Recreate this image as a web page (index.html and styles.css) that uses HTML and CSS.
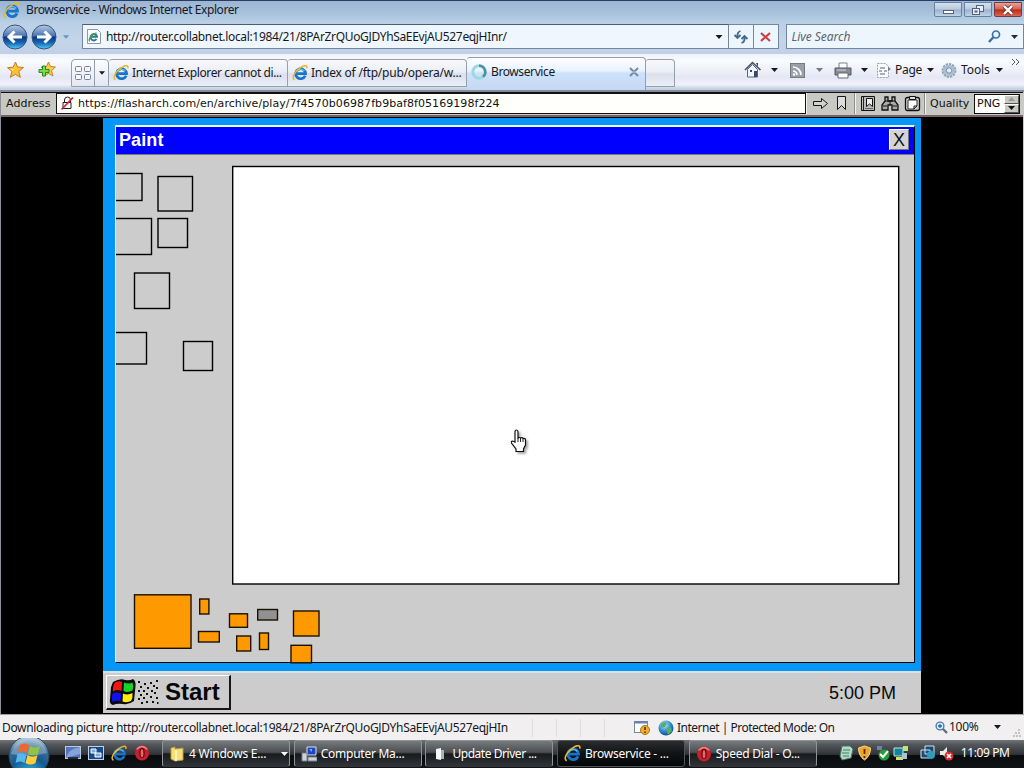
FILE: index.html
```html
<!DOCTYPE html>
<html lang="en">
<head>
<meta charset="utf-8">
<title>Browservice - Windows Internet Explorer</title>
<link rel="stylesheet" href="styles.css">
</head>
<body>
<svg class="defs" width="0" height="0" aria-hidden="true">
  <defs>
    <linearGradient id="orb" x1="0" y1="0" x2="0" y2="1"><stop offset="0" stop-color="#b9cbe5"/><stop offset=".45" stop-color="#4775b2"/><stop offset=".5" stop-color="#0d3580"/><stop offset=".75" stop-color="#1768b8"/><stop offset="1" stop-color="#53d0f5"/></linearGradient>
    <radialGradient id="globe" cx=".4" cy=".3" r=".7"><stop offset="0" stop-color="#bfe9ff"/><stop offset=".6" stop-color="#2b8acb"/><stop offset="1" stop-color="#12508e"/></radialGradient>
    <radialGradient id="startorb" cx=".5" cy="1" r=".95"><stop offset="0" stop-color="#34c4ed"/><stop offset=".5" stop-color="#15588f"/><stop offset=".8" stop-color="#3f6f98"/><stop offset="1" stop-color="#a9c5d8"/></radialGradient>
    <symbol id="ie" viewBox="0 0 16 16">
      <path d="M13.2 10.7A5 5 0 1 1 13.6 8.6H5.2" fill="none" stroke="#1675c9" stroke-width="2.7"/>
      <path d="M4.6 7.2A4.6 4.6 0 0 1 12.5 6" fill="none" stroke="#62c2f2" stroke-width="1.1"/>
      <path d="M2.6 14.8C-1 13.5 2.5 6.5 8 3 12-.2 15.8-.2 14.8 3.4" fill="none" stroke="#e9b92c" stroke-width="1.5"/>
    </symbol>
    <symbol id="caret" viewBox="0 0 7 4"><path d="M0 0h7L3.5 4z" fill="currentColor"/></symbol>
    <symbol id="opera" viewBox="0 0 16 16"><ellipse cx="8" cy="8" rx="7" ry="7.4" fill="#c7202b"/><path d="M2.6 4.4Q8-1.5 13.4 4.4" stroke="#f58a8a" stroke-width="1.4" fill="none"/><ellipse cx="8" cy="8" rx="2.7" ry="5" fill="#5e0b12"/><ellipse cx="8" cy="8.3" rx="1.4" ry="4" fill="#e9676b"/></symbol>
  </defs>
</svg>

<header class="titlebar">
  <svg class="title-icon" width="17" height="17"><use href="#ie"/></svg>
  <span class="title-text">Browservice - Windows Internet Explorer</span>
  <div class="winbtns">
    <span class="winbtn"><svg width="26" height="14"><rect x="8.500" y="7.500" width="10" height="3" fill="#fff" stroke="#53627b"/></svg></span>
    <span class="winbtn"><svg width="26" height="14" fill="#e8eef6" stroke="#53627b"><rect x="11.500" y="2.500" width="7" height="6"/><rect x="7.500" y="5.500" width="7" height="6"/><rect x="10" y="8" width="2" height="1"/></svg></span>
    <span class="winbtn close"><svg width="26" height="14"><path d="M9 3l8 8M17 3l-8 8" stroke="#713b3b" stroke-width="4"/><path d="M9 3l8 8M17 3l-8 8" stroke="#fff" stroke-width="2.400"/></svg></span>
  </div>
</header>

<nav class="navbar">
  <svg class="orb" width="26" height="26" viewBox="0 0 26 26"><circle cx="13" cy="13" r="12" fill="url(#orb)" stroke="#3b5275"/><path d="M20 13H8M12.500 7.500L7 13l5.500 5.500" stroke="#fff" stroke-width="3" fill="none"/></svg>
  <svg class="orb fwd" width="26" height="26" viewBox="0 0 26 26"><circle cx="13" cy="13" r="12" fill="url(#orb)" stroke="#3b5275"/><path d="M6 13h12M13.500 7.500L19 13l-5.500 5.500" stroke="#fff" stroke-width="3" fill="none"/></svg>
  <svg class="history" width="6" height="4"><use href="#caret"/></svg>
  <div class="url">
    <svg width="16" height="17" viewBox="0 0 16 17"><path d="M1.500 1.500h10l3 3v11h-13z" fill="#fcfdff" stroke="#8b98a5"/><path d="M10.500 11a3.200 3.200 0 1 1 .5-2.200H5" stroke="#287a9a" stroke-width="1.900" fill="none"/><path d="M3.500 13.500C2 11 6 6 10.500 4.800" stroke="#5b9d3b" fill="none" stroke-width="1.200"/></svg>
    <span class="url-text">http://router.collabnet.local:1984/21/8PArZrQUoGJDYhSaEEvjAU527eqjHInr/</span>
    <svg class="end" width="8" height="4"><use href="#caret"/></svg>
  </div>
  <div class="navbtn"><svg width="16" height="16" fill="none" stroke="#456a8c" stroke-width="1.800"><path d="M7.500 2Q4 3 4.500 8M1.500 6l3 3 3-3M8.500 14Q12 13 11.500 8M8.500 10l3-3 3 3"/></svg></div>
  <div class="navbtn stop"><svg width="14" height="14"><path d="M2 3l9 8M11 3l-9 8" stroke="#c94047" stroke-width="2.200"/></svg></div>
  <div class="search"><span>Live Search</span><svg class="lens" width="15" height="15" fill="none" stroke="#3e70a8"><circle cx="9" cy="5.500" r="3.500" fill="#eaf6ff" stroke-width="1.700"/><path d="M6.500 8L2 13" stroke-width="2.500"/></svg><svg width="7" height="4"><use href="#caret"/></svg></div>
</nav>

<div class="tabbar">
  <svg class="star" width="18" height="18" viewBox="0 0 18 18"><path d="M8.500 1l2 5 6 .5-4.700 4 1.500 5.800-5-3-5 3L5 10.500.500 6.700l5.700-.5z" fill="#fbc234" stroke="#c37c24"/><path d="M8.500 3L7 8 3 8l3 2" fill="#ffe893"/></svg>
  <svg class="star add" width="18" height="18" viewBox="0 0 18 18"><path d="M10.500 1l2 4.500 5 .5-4 3.500 1.500 5.500-4.500-2.500-5 2.500 1.500-5L3 6l5.500-.500z" fill="#fbc943" stroke="#bd8933"/><path d="M4.500 5h3v3.500H11v3H7.500V15h-3v-3.500H1v-3h3.500z" fill="#74df44" stroke="#2d852a"/></svg>
  <div class="quick"><svg width="22" height="24" fill="#f5f7fb" stroke="#75809a"><rect x="3.500" y="6.500" width="6" height="5" rx="1"/><rect x="12.500" y="6.500" width="6" height="5" rx="1"/><rect x="3.500" y="14.500" width="6" height="5" rx="1"/><rect x="12.500" y="14.500" width="6" height="5" rx="1"/></svg><span class="quick-drop"><svg width="6" height="4"><use href="#caret"/></svg></span></div>
  <div class="tab"><svg width="16" height="16"><use href="#ie"/></svg><span>Internet Explorer cannot di...</span></div>
  <div class="tab"><svg width="16" height="16"><use href="#ie"/></svg><span class="ftp">Index of /ftp/pub/opera/w...</span></div>
  <div class="tab active"><svg width="18" height="18" fill="none"><circle cx="9" cy="9" r="6.200" stroke="#9fd8df" stroke-width="3"/><path d="M9 2.800a6.200 6.200 0 0 1 4 11" stroke="#4d919f" stroke-width="2.500"/></svg><span>Browservice</span><svg class="tab-x" width="10" height="10"><path d="M1 1l8 8M9 1L1 9" stroke="#728b9d" stroke-width="2"/><path d="M3 5h4" stroke="#c5d6e3"/></svg></div>
  <div class="tab new"></div>
  <div class="cmds">
    <svg width="18" height="18" viewBox="0 0 18 18"><path d="M1 9l7.500-7.500L16.500 9" stroke="#42506c" stroke-width="1.600" fill="none"/><path d="M3.500 8.500l5-5 5 5v7.500h-10z" fill="#f2f5f9" stroke="#576783"/><path d="M12 2h2v4M10 10h3v6h-3zM6 9h2v2H6z" fill="#394866"/></svg>
    <svg class="c1" width="7" height="4"><use href="#caret"/></svg>
    <svg class="rss" width="15" height="15"><rect x=".5" y=".5" width="14" height="14" fill="#9aa0a8" stroke="#747b84"/><path d="M3 4a8 8 0 0 1 8 8M3 8a4 4 0 0 1 4 4" stroke="#fff" stroke-width="1.700" fill="none"/><circle cx="4" cy="11.500" r="1.200" fill="#fff"/></svg>
    <svg class="c2" width="7" height="4"><use href="#caret"/></svg>
    <svg class="printer" width="18" height="17"><path d="M5 1h8v6H5z" fill="#fff" stroke="#798290"/><path d="M1 6h16v7H1z" fill="#868e98" stroke="#50565e"/><path d="M3 8h9" stroke="#d0d5db"/><path d="M4 11h10v5H4z" fill="#fff" stroke="#626a73"/></svg>
    <svg class="c3" width="7" height="4"><use href="#caret"/></svg>
    <svg class="page" width="16" height="17"><path d="M1.500 1.500h8l3 3v11h-11z" fill="#f9fafc" stroke="#9b9fae" stroke-dasharray="2 1"/><path d="M4 6h5M3 9h3m2 0h3M4 12h5" stroke="#5a6274"/><path d="M12 5l3 2-3 2" fill="#727b92"/></svg>
    <span class="page-text">Page</span><svg width="7" height="4"><use href="#caret"/></svg>
    <svg class="gear" width="16" height="17" fill="none"><circle cx="8" cy="8.500" r="5.900" stroke="#8ea0b3" stroke-width="3" stroke-dasharray="2.200 .8"/><circle cx="8" cy="8.500" r="4.300" stroke="#a9bfd2" stroke-width="3"/><circle cx="8" cy="8.500" r="2.700" stroke="#7790a8"/></svg>
    <span class="tools-text">Tools</span><svg width="7" height="4"><use href="#caret"/></svg>
    <svg class="more" width="9" height="8"><path d="M1 1l3 3-3 3M5 1l3 3-3 3" fill="none" stroke="#535766"/></svg>
  </div>
</div>

<main class="page-area">
  <div class="remote-bar">
    <span class="address-label">Address</span>
    <div class="remote-url"><svg width="15" height="15"><path d="M4.500 6V4a3 3 0 0 1 6 0v2M3 6.500h8v6H3z" fill="none" stroke="#222"/><path d="M1.500 13.500L13 1.500" stroke="#dc1d3e" stroke-width="1.800"/></svg><span>https://flasharch.com/en/archive/play/7f4570b06987fb9baf8f05169198f224</span></div>
    <div class="rgroup go"><svg width="17" height="17" fill="#d2d2ce" stroke="#171717"><path d="M1.500 6.500h8v-3l6 5-6 5v-3h-8z"/></svg><svg class="bookmark" width="12" height="17"><path d="M1.500 1.500h8v13l-4-4-4 4z" fill="#ddd" stroke="#171717"/></svg></div>
    <div class="rgroup tools"><svg width="16" height="17"><path d="M1.500 1.500h13v14h-13z" fill="#bbb" stroke="#111"/><path d="M3.500 2v13" stroke="#222"/><path d="M6.500 3.500h6v8l-3-2.500-3 2.500z" fill="#eee" stroke="#111"/><path d="M5 13.500h8" stroke="#666"/></svg><svg width="18" height="17"><path d="M4 2h3v4h4V2h3v4l3 4v5h-6v-5H7v5H1v-5l3-4z" fill="#aaa" stroke="#111" stroke-width="1.300"/><path d="M4 6h10M2 11h4m6 0h4M9 6v4" stroke="#111"/></svg><svg width="17" height="17"><path d="M3.500 2.500h10q2 0 2 2v9q0 2-2 2h-10q-2 0-2-2v-9q0-2 2-2z" fill="#ccc" stroke="#111" stroke-width="1.300"/><path d="M4 5h9v6l-3 3H4z" fill="#fff" stroke="#333"/><path d="M5.500 1.500h6v3h-6z" fill="#ddd" stroke="#111"/><path d="M10 14v-3h3" stroke="#111" fill="none"/></svg></div>
    <div class="rgroup quality"><span>Quality</span><div class="select"><span>PNG</span><div class="spin"><i><svg width="7" height="4"><path d="M0 4h7L3.500 0z" fill="#999"/></svg></i><i><svg width="7" height="4"><use href="#caret"/></svg></i></div></div></div>
  </div>
  <div class="stage">
    <div class="desktop">
      <section class="paint">
        <div class="paint-title"><span>Paint</span><b class="paint-close">X</b></div>
        <svg class="paint-body" width="798" height="508" viewBox="116 154 798 508">
          <path d="M116 154H914" stroke="#222"/>
          <rect x="232.700" y="166.500" width="666" height="417.500" fill="#fff" stroke="#000" stroke-width="1.400"/>
          <g fill="none" stroke="#000" stroke-width="1.400">
            <rect x="110" y="173.500" width="32" height="27"/><rect x="158" y="176.500" width="34.500" height="34.500"/>
            <rect x="110" y="218.500" width="41.500" height="36"/><rect x="158" y="218.500" width="29.500" height="29"/>
            <rect x="134.500" y="273" width="35" height="35.500"/><rect x="110" y="332.500" width="36.500" height="31.500"/>
            <rect x="183.500" y="341.500" width="29" height="29"/>
          </g>
          <g fill="#f90" stroke="#1a1100" stroke-width="1.400">
            <rect x="134.500" y="594.800" width="56.500" height="53.500"/><rect x="199.700" y="599" width="9.200" height="15"/>
            <rect x="198.500" y="631.500" width="20.800" height="10.500"/><rect x="229.500" y="613.800" width="18" height="13.500"/>
            <rect x="257.700" y="609.500" width="19.800" height="10.500" fill="#919191"/><rect x="236.700" y="636" width="14" height="15"/>
            <rect x="259.500" y="633" width="9" height="16.500"/><rect x="293.500" y="611" width="25.500" height="25"/>
            <rect x="291" y="645.300" width="20.500" height="17.500"/>
          </g>
        </svg>
      </section>
      <div class="retro-bar">
        <div class="retro-start">
          <svg width="54" height="28" viewBox="0 0 54 28"><path d="M5 4Q12 0 17 2q5 1 8-1 3 2 2.500 7L26 23q-5 4-11 3-6-1-10 1-4-1-3-6L3 9z" fill="#0a0a0a"/><path d="M7 4.500q4-2 7-.5l-.5 9Q9 11 5 13.500q-.5-6 2-9z" fill="#f31713"/><path d="M16 4.500q5 2 8.500 0 1.500 4 0 8-5 2.500-9 .5z" fill="#17d527"/><path d="M4.500 15.500q4-2 8.500 0l-.5 8q-4-1.500-8 .5-1.500-4 0-8.500z" fill="#1012ed"/><path d="M15 15.500q5 2 9.500-.5.500 5-1.500 8-4 2-8.500.5z" fill="#ffec12"/><path fill="#111" d="M30 3h2v2h-2zM36 5h2v2h-2zM42 4h2v2h-2zM48 2h2v2h-2zM32 8h2v2h-2zM39 9h2v2h-2zM45 7h2v2h-2zM48 9h2v2h-2zM30 12h2v2h-2zM35 12h2v2h-2zM43 12h2v2h-2zM32 16h2v2h-2zM38 15h2v2h-2zM46 14h2v2h-2zM30 20h2v2h-2zM35 19h2v2h-2zM42 18h2v2h-2zM48 19h2v2h-2zM33 24h2v2h-2zM38 23h2v2h-2zM44 23h2v2h-2zM49 24h1.500v2H49z"/></svg>
          <b>Start</b>
        </div>
        <span class="retro-clock">5:00 PM</span>
      </div>
    </div>
    <svg class="cursor" width="18" height="24" viewBox="0 0 18 24"><path d="M5 13V3q0-2 1.500-2T8 3v6q2-1 2.500 0 2-1 2.500.500 2.500-.500 2.500 1.500v5l-2 4v2.500H6V20l-4.500-6q-.500-2 1-2z" fill="#fff" stroke="#111" stroke-width="1.200"/><path d="M8 9v4m2.500-4v4M13 10v3" stroke="#222"/></svg>
  </div>
</main>

<footer class="statusbar">
  <span class="download">Downloading picture http://router.collabnet.local:1984/21/8PArZrQUoGJDYhSaEEvjAU527eqjHIn</span>
  <i class="pane"></i><i class="pane"></i><i class="pane"></i><i class="pane"></i>
  <svg class="warn" width="18" height="16"><rect x="1.500" y="1.500" width="13" height="11" fill="#fff" stroke="#7b8694"/><path d="M2 2.500h12" stroke="#5f83bd" stroke-width="2"/><circle cx="12" cy="10" r="4.500" fill="#efad2b" stroke="#b27219"/><path d="M12 7v3m0 1.500v1.500" stroke="#463008" stroke-width="1.500"/></svg>
  <svg class="net" width="16" height="16"><circle cx="8" cy="8" r="7.500" fill="url(#globe)"/><path d="M3 4q3-3 6-1L7 7 3 8zM8 9l5-2 1 4-4 4z" fill="#55ad68"/></svg>
  <span class="zone">Internet | Protected Mode: On</span>
  <div class="zoom"><svg width="13" height="13" fill="none"><circle cx="5" cy="5" r="3.900" fill="#d9efff" stroke="#527ba5" stroke-width="1.400"/><path d="M8 8l4 4" stroke="#596a7b" stroke-width="2.300"/><path d="M3 5h4M5 3v4" stroke="#1569b7" stroke-width="1.300"/></svg><span>100%</span><svg class="zoom-caret" width="7" height="4"><use href="#caret"/></svg></div>
  <svg class="grip" width="8" height="9" fill="#c5c3c0"><path d="M5 1h2v2H5zM2 4h2v2H2zM5 4h2v2H5zM0 7h2v2H0zM3 7h2v2H3zM6 7h2v2H6z"/></svg>
</footer>

<div class="taskbar">
  <svg class="vista" width="44" height="32" viewBox="0 0 44 32"><circle cx="21" cy="18" r="20" fill="url(#startorb)" stroke="#2b4554"/><path d="M3 16Q7 1 21 0q14 1 18 15-18 5-36 1" fill="#d8e6ef" opacity=".35"/><path d="M12 7q5-3 9 0l-2 8q-4-3-9-1z" fill="#ef672b"/><path d="M22 8q5 3 10 0l-2 8q-5 3-10 0z" fill="#8fc448"/><path d="M9.500 16q5-2 9 1l-2 8q-4-3-9 0z" fill="#55b8ec"/><path d="M19.500 17q5 3 10 0l-2 8q-5 3-10 0z" fill="#ffce38"/></svg>
  <div class="launch">
    <svg width="16" height="14"><rect x=".5" y=".5" width="15" height="12" fill="#5475bb" stroke="#b8c9df"/><path d="M1 12Q3 3 15 1V8z" fill="#85a2da"/><path d="M3 12h10" stroke="#242c38" stroke-width="2"/></svg>
    <svg width="16" height="14"><rect x=".5" y=".5" width="15" height="13" fill="#174887" stroke="#bfd2e5"/><path d="M3 3h5v4H3zM7 7h6v4H7z" fill="#78aada" stroke="#fff"/></svg>
    <svg width="16" height="17"><use href="#ie"/></svg>
    <svg width="16" height="16"><use href="#opera"/></svg>
  </div>
  <div class="tasks">
    <div class="task"><svg width="16" height="16"><path d="M2 2l4-1v2l8-1v12l-8 1-4-2z" fill="#f3df7b" stroke="#b99b40"/><path d="M7 4v11" stroke="#fff4b4" stroke-width="2"/></svg><span>4 Windows E...</span><svg class="task-caret" width="7" height="4"><use href="#caret"/></svg></div>
    <div class="task"><svg width="16" height="16"><path d="M6 1h9v8H6z" fill="#1e46c1" stroke="#d8e2f4"/><path d="M1 7h5v8H1zM7 11h9v4H7z" fill="#cbd3db" stroke="#79818b"/><path d="M8 3h3v3" fill="#85aaf0"/></svg><span>Computer Ma...</span></div>
    <div class="task"><svg width="16" height="16"><path d="M4 3l5-1v12l-5-1z" fill="#f7f7f7"/><path d="M9 4h3v9H9z" fill="#adb1b4"/></svg><span class="driver">Update Driver ...</span></div>
    <div class="task pressed"><svg width="17" height="17"><use href="#ie"/></svg><span>Browservice - ...</span></div>
    <div class="task"><svg width="16" height="16"><use href="#opera"/></svg><span>Speed Dial - O...</span></div>
  </div>
  <div class="tray">
    <svg width="15" height="16"><path d="M3 1h8l3 3-2 9-9 2-2-4z" fill="#b5d9c5" stroke="#477567"/><path d="M4 5h7M3 8h7M4 11h6" stroke="#3e806d"/></svg>
    <svg width="15" height="16"><path d="M7.500 1l6 2q0 8-6 12-6-4-6-12z" fill="#eca62d" stroke="#f9d98c"/><path d="M7.500 4v5m0 2v2" stroke="#51300a" stroke-width="1.800"/></svg>
    <svg width="15" height="16"><path d="M2 1h5v4H2z" fill="#737fac"/><circle cx="9" cy="10" r="5.500" fill="#279d37"/><path d="M5 9l3 3 5-6" stroke="#fff" stroke-width="2" fill="none"/></svg>
    <svg width="16" height="16"><path d="M1 3h9v8H1z" fill="#138492" stroke="#bfe5ea"/><path d="M10 1h5v5h-5zM3 12h7v3H3z" fill="#c8e56b"/><path d="M9 8h5v6H9z" fill="#a9c5d1"/></svg>
    <svg class="network" width="16" height="16"><path d="M5 1h9v8H5zM1 5h9v8H1z" fill="#164d77" stroke="#d5e6ef"/><circle cx="11" cy="10" r="4" fill="#349bba"/></svg>
    <svg width="16" height="16"><path d="M1 6h3l4-4v12l-4-4H1z" fill="#e9e9e9"/><circle cx="10" cy="11" r="4.500" fill="#d52b2d"/><path d="M8 9l4 4m0-4l-4 4" stroke="#fff" stroke-width="1.600"/></svg>
    <span class="clock">11:09 PM</span>
  </div>
</div>
</body>
</html>
```
FILE: styles.css
```css
* { box-sizing: border-box; }
body { margin: 0; width: 1024px; height: 768px; overflow: hidden; display: flex; flex-direction: column; font: 12px/16px "Noto Sans", "Open Sans", sans-serif; color: #151922; background: #d4dfed; }
svg { display: block; flex: none; }
span { white-space: nowrap; }
.defs { position: absolute; }

.titlebar { height: 21px; flex: none; display: flex; align-items: flex-start; padding: 1px 2px 0 3px; border-top: 1px solid #243e68; background: linear-gradient(#9db5d1, #a6bfdb 50%, #b6cee4); }
.title-text { margin: 0 0 0 6px; letter-spacing: -.42px; }
.winbtns { margin-left: auto; display: flex; gap: 2px; }
.winbtn { width: 28px; height: 15px; border: 1px solid #6680a1; border-radius: 0 0 2px 2px; background: linear-gradient(#d6e0ec, #b8cadf 48%, #9ab2cd 52%, #c0d4e8); display: flex; justify-content: center; }
.close { background: linear-gradient(#e8a196, #d4614e 48%, #b82818 52%, #db6852); border-color: #733b45; }

.navbar { height: 33px; flex: none; display: flex; align-items: flex-start; padding: 3px 0 0 2px; background: linear-gradient(#b9cfe5, #c3d5e9 60%, #c1d0e6); }
.fwd { margin-left: 3px; }
.history { margin: 11px 0 0 6px; color: #6792bb; }
.url { width: 648px; height: 25px; margin-left: 13px; padding: 0 5px 0 3px; display: flex; align-items: center; border: 1px solid #74869f; border-top-color: #4c5e76; background: #f0f6fd; }
.url-text { margin-left: 4px; letter-spacing: -.34px; }
.end { margin-left: auto; }
.navbtn { width: 25px; height: 25px; display: flex; align-items: center; justify-content: center; border: 1px solid #74869f; border-left: 0; background: #edf5fd; }
.search { width: 239px; height: 25px; margin-left: 7px; padding: 0 5px; display: flex; align-items: center; border: 1px solid #74869f; background: #edf5fd; font-style: italic; color: #5d646f; letter-spacing: -.05px; }
.lens { margin: 0 9px 0 auto; }
.search svg:last-child { color: #222d42; }

.tabbar { height: 38px; flex: none; display: flex; align-items: flex-start; padding: 3px 4px 0 7px; border-bottom: 2px solid #858c99; background: linear-gradient(#eef3fb, #fafbfe 20%, #e5e7f4 65%, #eff2fa 85%, #c6d2e5 96%); }
.star { margin-top: 4px; }
.add { margin-left: 13px; }
.quick { width: 38px; height: 28px; margin: 2px 0 0 15px; display: flex; border: 1px solid #979eae; border-radius: 4px 4px 0 0; background: linear-gradient(#fcfdff, #e4e7f1); }
.quick-drop { width: 15px; display: flex; align-items: center; justify-content: center; border-left: 1px solid #979eae; }
.tab { width: 179px; height: 28px; margin-top: 2px; padding-left: 4px; display: flex; align-items: center; border: 1px solid #989fac; border-left: 0; border-radius: 3px 4px 0 0; background: linear-gradient(#f8f9fd, #eceef6 45%, #dcdfec 55%, #ebeff7); }
.tab span { margin-left: 3px; letter-spacing: -.4px; }
.tab .ftp { letter-spacing: -.22px; }
.active { height: 33px; margin-top: 0; padding: 0 6px 4px 3px; border-bottom: 0; background: linear-gradient(#fff, #e9f2fe 40%, #cce1fa 48%, #c5d9f4); }
.tab-x { margin-left: auto; }
.new { width: 29px; }
.cmds { flex: 1; height: 26px; display: flex; align-items: center; margin-left: 69px; }
.c1 { margin-left: 9px; }
.rss { margin-left: 12px; }
.c2 { margin-left: 11px; color: #747b86; }
.printer { margin-left: 11px; }
.c3 { margin-left: 9px; }
.page { margin-left: 8px; }
.page-text { width: 26px; margin: 0 6px 0 3px; letter-spacing: -.3px; }
.gear { margin-left: 7px; }
.tools-text { width: 29px; margin: 0 6px 0 4px; letter-spacing: -.1px; }
.more { margin: 0 0 17px auto; }

.page-area { height: 622px; flex: none; display: flex; flex-direction: column; border-left: 1px solid #8b8f96; border-right: 1px solid #c7ccd3; background: #000; }
.remote-bar { height: 25px; display: flex; align-items: flex-start; padding: 0 3px 0 1px; border-top: 1px solid #111; border-bottom: 2px solid #77616b; background: #c8c8c4; font: 11px/14px "DejaVu Sans", sans-serif; color: #111; }
.address-label { width: 54px; padding: 4px 0 0 4px; letter-spacing: .1px; }
.remote-url { width: 750px; height: 21px; display: flex; align-items: center; padding-left: 3px; border: 1px solid #111; background: #fffffc; }
.remote-url span { margin-left: 3px; letter-spacing: .065px; }
.rgroup { height: 21px; display: flex; align-items: center; border-left: 1px solid #f4f4f2; border-right: 1px solid #8c8c88; }
.go { width: 49px; padding-left: 5px; }
.bookmark { margin-left: 7px; }
.tools { width: 70px; padding-left: 4px; gap: 5px; }
.quality { flex: 1; padding-left: 4px; justify-content: space-between; border-right: 0; }
.select { width: 46px; height: 20px; display: flex; justify-content: space-between; border: 1px solid #111; padding: 0 0 0 2px; background: #fff; align-items: center; }
.spin { width: 15px; height: 18px; display: grid; grid-template-rows: 1fr 1fr; }
.spin i { display: flex; align-items: center; justify-content: center; border: 1px solid #555; border-top-color: #fff; border-left-color: #fff; background: #c8c8c4; }

.stage { position: relative; flex: 1; padding: 1px 0 0 102px; }
.desktop { width: 818px; height: 595px; display: flex; flex-direction: column; align-items: flex-start; background: #0596f8; padding: 7px 0 0 12px; }
.paint { width: 800px; height: 538px; flex: none; border: 1px solid #000; border-top: 2px solid #e9ffff; border-left-color: #eef; background: #ccc; }
.paint-title { height: 27px; display: flex; justify-content: space-between; align-items: center; padding: 0 5px 2px 3px; background: #00f; color: #fff; font: bold 18px/24px "Liberation Sans", Arial, sans-serif; letter-spacing: .1px; }
.paint-close { width: 20px; height: 21px; border: 1px solid #777; border-top-color: #fff; border-left-color: #fff; background: #d4d4d4; color: #111; font: 18px/20px "Liberation Sans", Arial, sans-serif; text-align: center; }
.paint-body { overflow: visible; clip-path: inset(0 0 -2px 0); }
.retro-bar { width: 818px; height: 42px; flex: none; margin: 8px 0 0 -12px; padding: 2px 25px 0 3px; display: flex; justify-content: space-between; border-top: 2px solid #d9e1e7; background: #ccc; font-family: "Liberation Sans", Arial, sans-serif; color: #090909; }
.retro-start { width: 125px; height: 35px; display: flex; align-items: center; border: 1px solid #161616; border-width: 1px 2px 2px 1px; border-top-color: #fff; border-left-color: #fff; padding-left: 1px; font-size: 24px; line-height: 30px; }
.retro-start b { margin-left: 3px; }
.retro-clock { font-size: 18px; line-height: 30px; padding-top: 3px; }
.cursor { position: absolute; left: 509px; top: 312px; filter: drop-shadow(2px 2px 1px #aaa); }

.statusbar { height: 26px; flex: none; display: flex; align-items: center; padding: 1px 3px 0 2px; border-top: 1px solid #a0a0a0; background: #f1eff0; }
.download { width: 530px; letter-spacing: -.34px; }
.pane { width: 24px; height: 18px; border-left: 1px solid #e0dcdd; }
.warn { margin-left: 5px; }
.net { margin-left: 7px; }
.zone { width: 230px; margin-left: 3px; letter-spacing: -.5px; }
.zoom { display: flex; align-items: center; margin-left: 28px; padding-bottom: 2px; }
.zoom span { width: 32px; margin-left: 1px; letter-spacing: -.3px; }
.zoom-caret { margin-left: 13px; }
.grip { margin: 9px 0 0 auto; }

.taskbar { flex: 1; display: flex; align-items: flex-start; background: linear-gradient(#717578, #53575b 15%, #303337 48%, #090b0d 52%, #121518); color: #fff; }
.vista { margin: -2px 0 0 8px; }
.launch { display: flex; align-items: center; gap: 7px; height: 26px; margin-left: 13px; }
.tasks { display: flex; gap: 3.7px; margin-left: 12px; }
.task { width: 128px; height: 27px; padding-left: 6px; display: flex; align-items: center; border: 1px solid #909496; border-bottom-color: #333; border-radius: 3px; background: linear-gradient(#777a7d, #4c4f52 45%, #181a1d 52%, #303438); }
.task span { margin-left: 4px; letter-spacing: -.25px; }
.task .driver { letter-spacing: -.45px; }
.task-caret { margin-left: auto; margin-right: 1px; }
.pressed { background: linear-gradient(#2a2c2e, #111315 50%, #050607); border-color: #505559; }
.tray { display: flex; align-items: center; height: 25px; margin-left: 22px; gap: 3px; }
.network { margin-left: 8px; }
.clock { margin-left: 3px; letter-spacing: -.4px; }
```
